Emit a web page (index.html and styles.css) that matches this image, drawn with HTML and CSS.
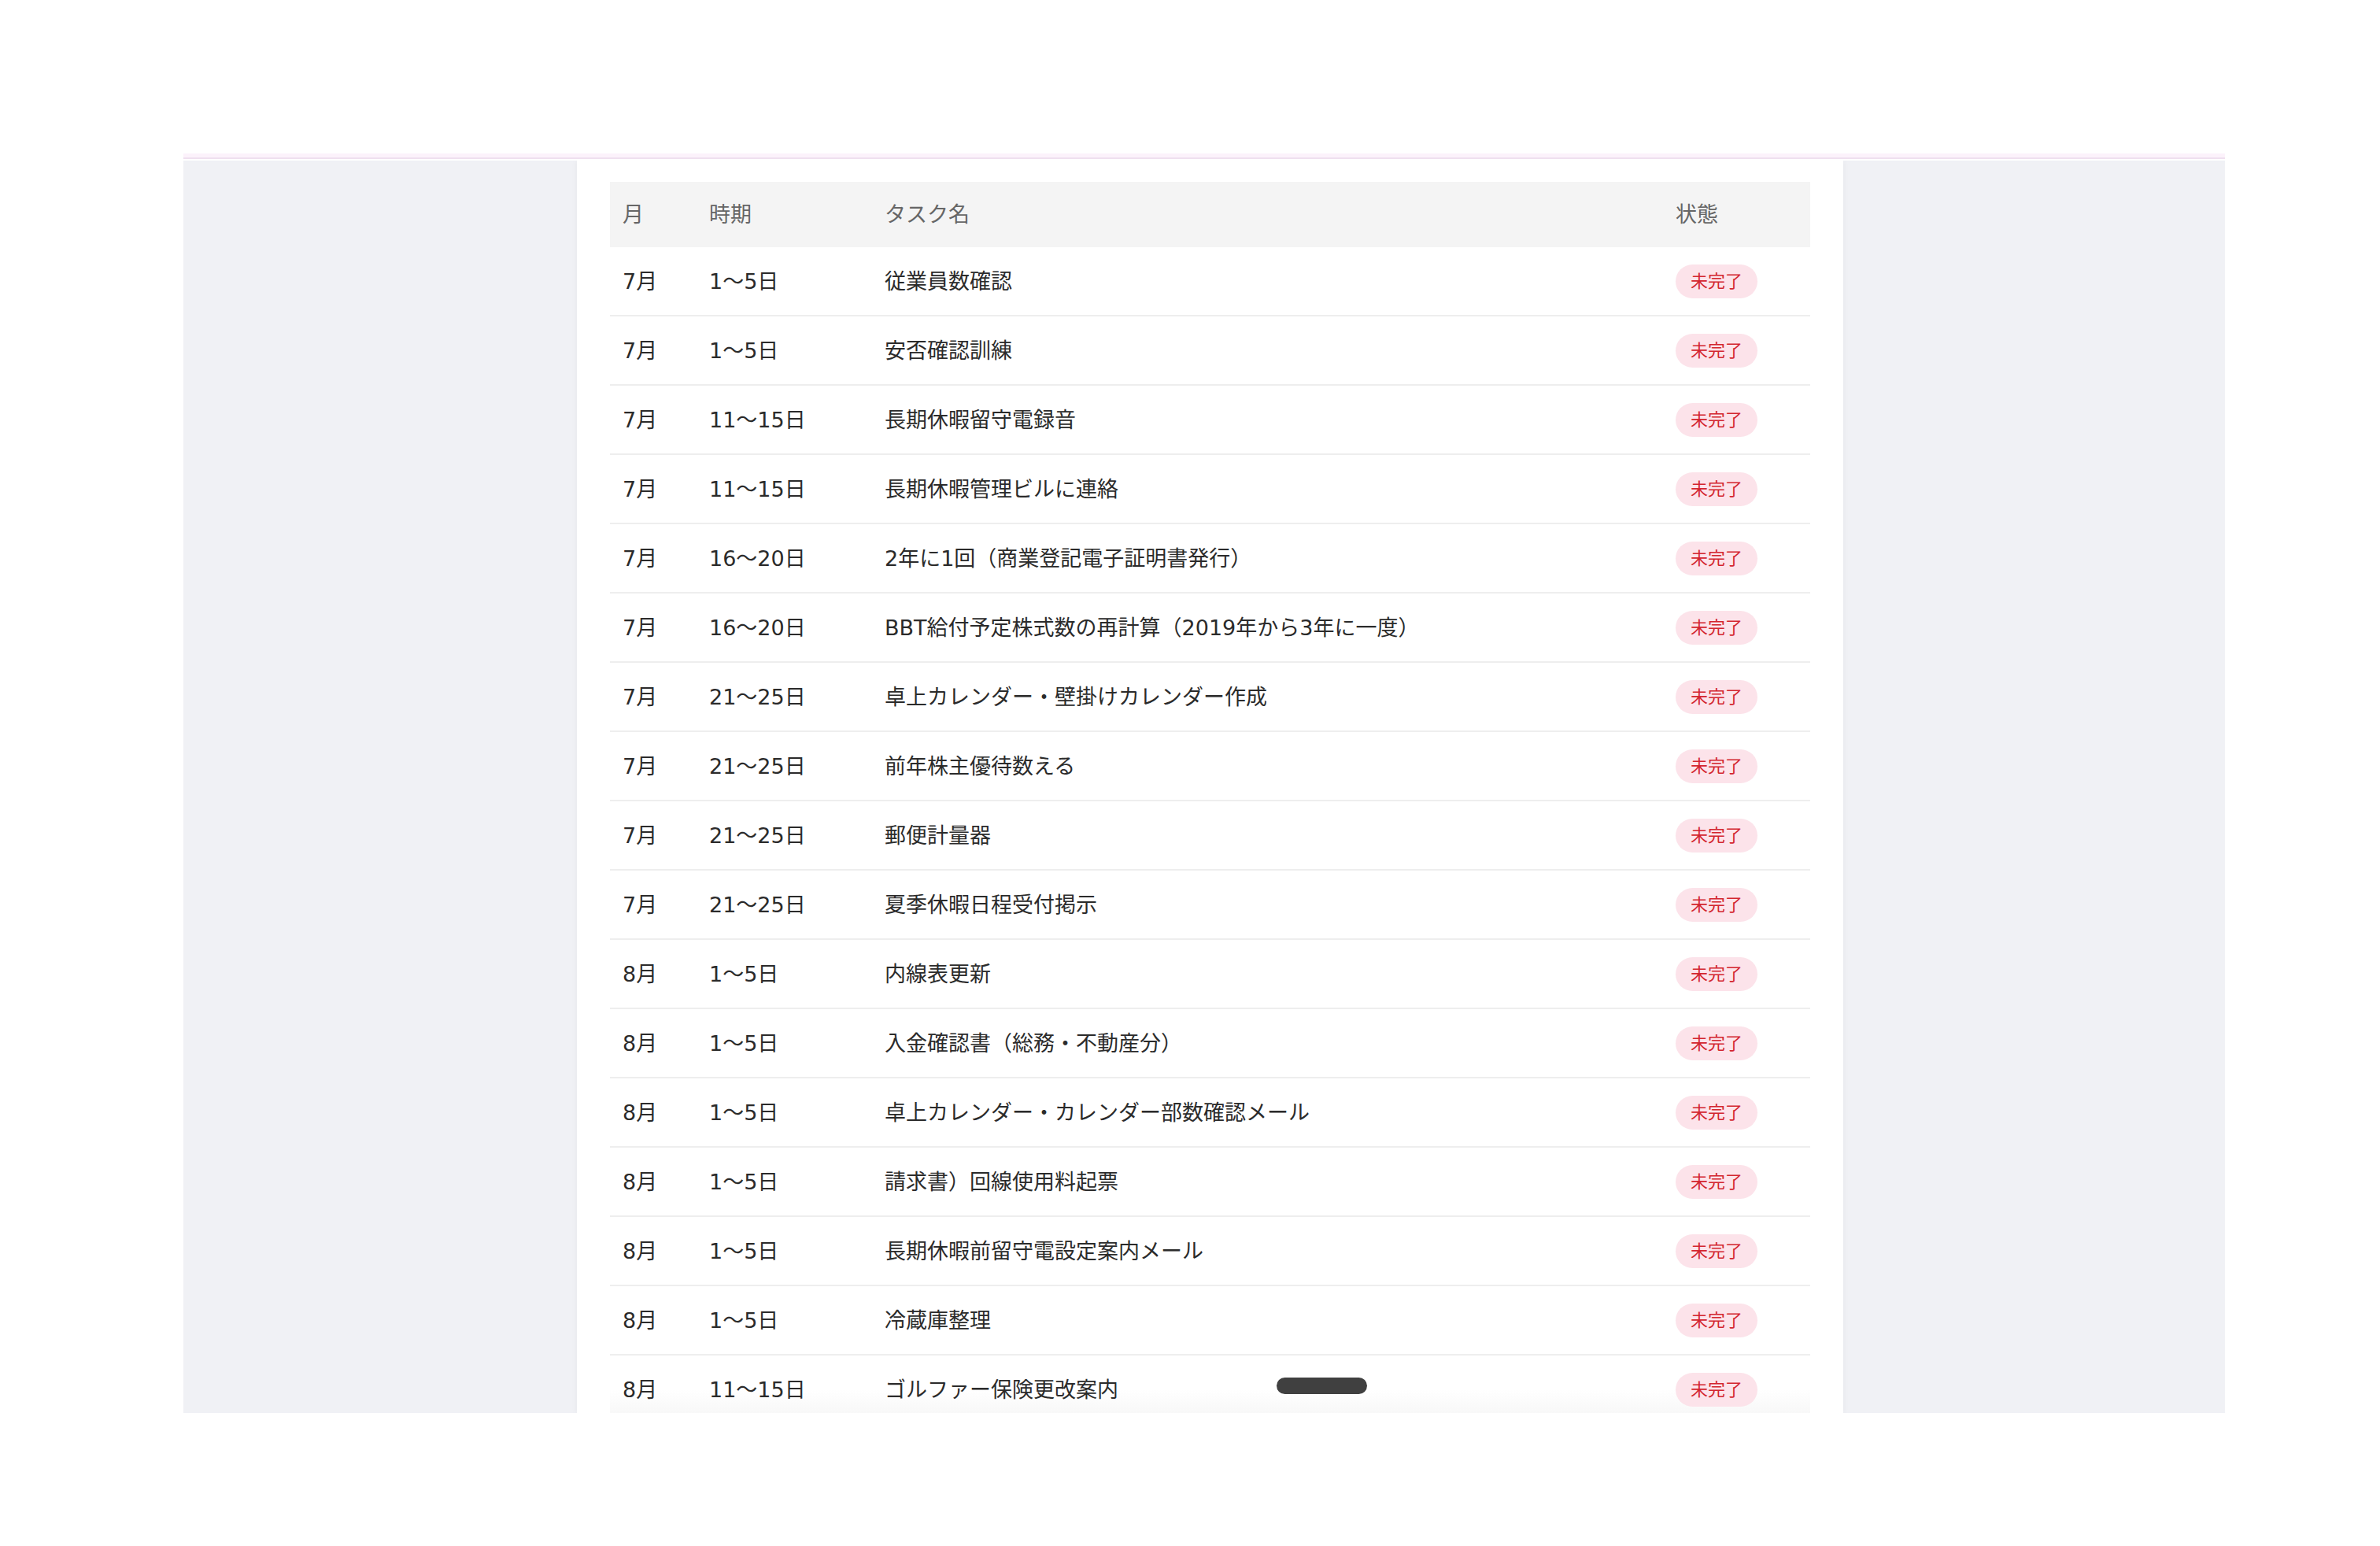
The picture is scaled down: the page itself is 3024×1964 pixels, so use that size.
FILE: index.html
```html
<!DOCTYPE html>
<html lang="ja">
<head>
<meta charset="utf-8">
<title>タスク一覧</title>
<link rel="stylesheet" href="styles.css">
</head>
<body>
<div class="frame">
  <div class="topline"></div>
  <div class="stage">
    <div class="card">
      <table class="tasks">
        <colgroup>
          <col class="c-month"><col class="c-period"><col class="c-name"><col class="c-status">
        </colgroup>
        <thead>
          <tr><th>月</th><th>時期</th><th>タスク名</th><th>状態</th></tr>
        </thead>
        <tbody>
          <tr><td>7月</td><td>1〜5日</td><td>従業員数確認</td><td><span class="badge">未完了</span></td></tr>
          <tr><td>7月</td><td>1〜5日</td><td>安否確認訓練</td><td><span class="badge">未完了</span></td></tr>
          <tr><td>7月</td><td>11〜15日</td><td>長期休暇留守電録音</td><td><span class="badge">未完了</span></td></tr>
          <tr><td>7月</td><td>11〜15日</td><td>長期休暇管理ビルに連絡</td><td><span class="badge">未完了</span></td></tr>
          <tr><td>7月</td><td>16〜20日</td><td>2年に1回（商業登記電子証明書発行）</td><td><span class="badge">未完了</span></td></tr>
          <tr><td>7月</td><td>16〜20日</td><td>BBT給付予定株式数の再計算（2019年から3年に一度）</td><td><span class="badge">未完了</span></td></tr>
          <tr><td>7月</td><td>21〜25日</td><td>卓上カレンダー・壁掛けカレンダー作成</td><td><span class="badge">未完了</span></td></tr>
          <tr><td>7月</td><td>21〜25日</td><td>前年株主優待数える</td><td><span class="badge">未完了</span></td></tr>
          <tr><td>7月</td><td>21〜25日</td><td>郵便計量器</td><td><span class="badge">未完了</span></td></tr>
          <tr><td>7月</td><td>21〜25日</td><td>夏季休暇日程受付掲示</td><td><span class="badge">未完了</span></td></tr>
          <tr><td>8月</td><td>1〜5日</td><td>内線表更新</td><td><span class="badge">未完了</span></td></tr>
          <tr><td>8月</td><td>1〜5日</td><td>入金確認書（総務・不動産分）</td><td><span class="badge">未完了</span></td></tr>
          <tr><td>8月</td><td>1〜5日</td><td>卓上カレンダー・カレンダー部数確認メール</td><td><span class="badge">未完了</span></td></tr>
          <tr><td>8月</td><td>1〜5日</td><td>請求書）回線使用料起票</td><td><span class="badge">未完了</span></td></tr>
          <tr><td>8月</td><td>1〜5日</td><td>長期休暇前留守電設定案内メール</td><td><span class="badge">未完了</span></td></tr>
          <tr><td>8月</td><td>1〜5日</td><td>冷蔵庫整理</td><td><span class="badge">未完了</span></td></tr>
          <tr class="last"><td>8月</td><td>11〜15日</td><td>ゴルファー保険更改案内</td><td><span class="badge">未完了</span></td></tr>
        </tbody>
      </table>
    </div>
    <div class="home-indicator"></div>
  </div>
</div>
</body>
</html>
```

FILE: styles.css
```css
html, body {
  margin: 0;
  padding: 0;
  background: #ffffff;
}

body {
  font-family: "DejaVu Sans", "Noto Sans CJK JP", sans-serif;
  color: #333333;
}

.frame {
  margin: 195px 0 0 233px;
  width: 2594px;
}

.topline {
  height: 5px;
  background: #fcf2fb;
  border-bottom: 2px solid #efe0ef;
  margin-bottom: 2px;
}

.stage {
  position: relative;
  height: 1591px;
  background: #f0f1f5;
  overflow: hidden;
  padding: 0 485px 0 500px;
  box-sizing: border-box;
}

.card {
  height: 100%;
  background: #ffffff;
  padding: 27px 42px 0 42px;
  box-sizing: border-box;
  box-shadow: 0 0 8px rgba(0, 0, 0, 0.05);
}

.tasks {
  width: 1525px;
  border-collapse: collapse;
  table-layout: fixed;
  font-size: 27px;
}

.c-month { width: 110px; }
.c-period { width: 223px; }
.c-name { width: 1005px; }
.c-status { width: 187px; }

.tasks th {
  height: 83px;
  padding: 0 0 0 16px;
  background: #f4f4f4;
  color: #666666;
  font-weight: 400;
  text-align: left;
  vertical-align: middle;
  line-height: 1;
}

.tasks td {
  height: 86px;
  padding: 0 0 0 16px;
  border-bottom: 2px solid #eeeeee;
  color: #2b2b2b;
  vertical-align: middle;
  line-height: 1;
  white-space: nowrap;
}

.tasks tr.last td {
  border-bottom: 0;
  background: linear-gradient(to bottom, #ffffff 50%, #f8f8f8 85%);
}

.badge {
  display: inline-block;
  height: 43px;
  line-height: 43px;
  padding: 0 19px;
  border-radius: 22px;
  background: #fce3ea;
  color: #d3262f;
  font-size: 22px;
}

.home-indicator {
  position: absolute;
  left: 1389px;
  top: 1546px;
  width: 115px;
  height: 21px;
  border-radius: 11px;
  background: #404040;
}
```
